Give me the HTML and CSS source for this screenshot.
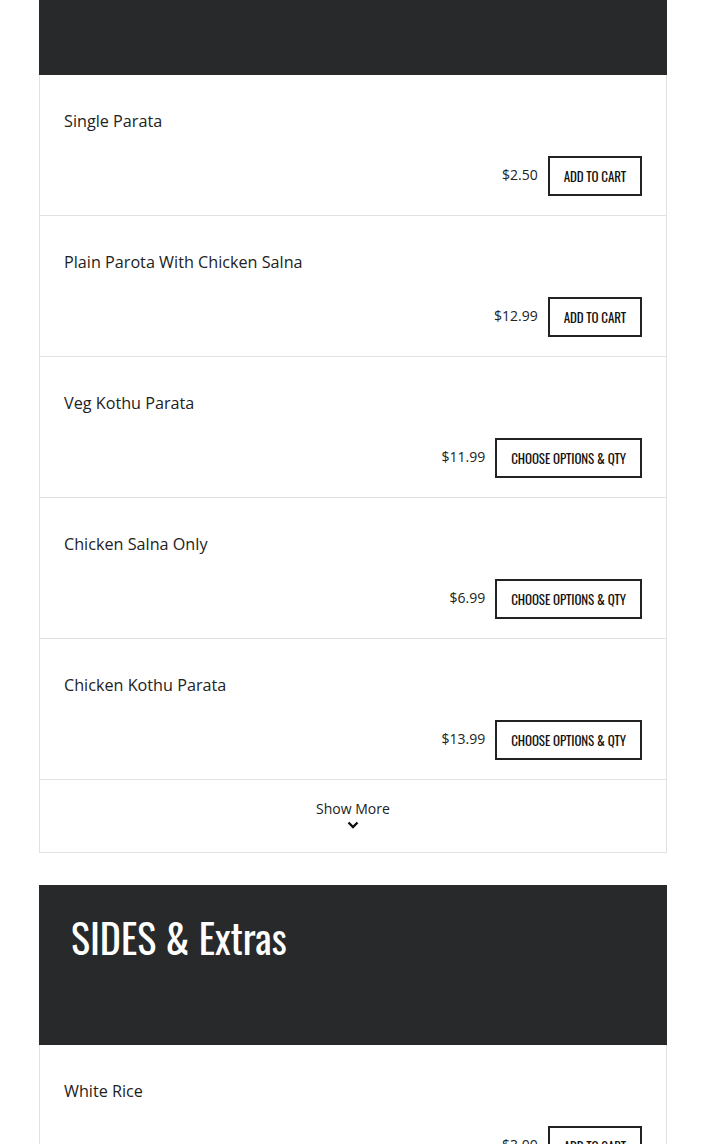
FILE: index.html
```html
<!DOCTYPE html>
<html>
<head>
  <meta charset="UTF-8" />
  <meta name="viewport" content="width=device-width, initial-scale=1.0" />
  <title>Menu</title>
  <link rel="stylesheet" href="styles.css">
</head>
<body>
  <div class="menu">
    <section class="category">
      <div class="category-head top"></div>
      <div class="items">
        <div class="item">
          <div class="item-name">Single Parata</div>
          <div class="item-buy">
            <span class="price">$2.50</span>
            <button class="cart-btn">Add to cart</button>
          </div>
        </div>
        <div class="item">
          <div class="item-name">Plain Parota With Chicken Salna</div>
          <div class="item-buy">
            <span class="price">$12.99</span>
            <button class="cart-btn">Add to cart</button>
          </div>
        </div>
        <div class="item">
          <div class="item-name">Veg Kothu Parata</div>
          <div class="item-buy">
            <span class="price">$11.99</span>
            <button class="cart-btn">Choose options &amp; qty</button>
          </div>
        </div>
        <div class="item">
          <div class="item-name">Chicken Salna Only</div>
          <div class="item-buy">
            <span class="price">$6.99</span>
            <button class="cart-btn">Choose options &amp; qty</button>
          </div>
        </div>
        <div class="item">
          <div class="item-name">Chicken Kothu Parata</div>
          <div class="item-buy">
            <span class="price">$13.99</span>
            <button class="cart-btn">Choose options &amp; qty</button>
          </div>
        </div>
        <div class="show-more">
          <span>Show More</span>
          <svg width="12" height="8" viewBox="0 0 12 8">
            <path d="M1.5 1.5 L6 6 L10.5 1.5" fill="none" stroke="#111" stroke-width="2.4" />
          </svg>
        </div>
      </div>
    </section>

    <section class="category">
      <div class="category-head">
        <h2>SIDES &amp; Extras</h2>
      </div>
      <div class="items">
        <div class="item">
          <div class="item-name">White Rice</div>
          <div class="item-buy">
            <span class="price">$3.00</span>
            <button class="cart-btn">Add to cart</button>
          </div>
        </div>
      </div>
    </section>
  </div>
</body>
</html>
```

FILE: styles.css
```css
body {
  margin: 0;
  font-family: "Open Sans", Arial, sans-serif;
  color: #222;
  background-color: #fff;
}

.menu {
  width: 628px;
  margin-left: 39px;
  display: flex;
  flex-direction: column;
  gap: 32px;
}

.category-head {
  background-color: #27292b;
  height: 160px;
  padding: 0 32px;
  box-sizing: border-box;
}

.category-head.top {
  height: 75px;
}

.category-head h2 {
  margin: 0;
  padding-top: 21px;
  font-family: "Oswald", "DejaVu Sans Condensed", sans-serif;
  font-weight: 400;
  font-size: 40px;
  line-height: 62px;
  color: #fff;
}

.items {
  border: 1px solid #e2e2e2;
  border-top: none;
}

.item {
  padding: 33px 24px 19px;
  border-bottom: 1px solid #e2e2e2;
}

.item-name {
  font-size: 16.2px;
  line-height: 26px;
  color: #222;
}

.item-buy {
  margin-top: 22px;
  display: flex;
  justify-content: flex-end;
  align-items: center;
  gap: 10px;
}

.price {
  font-size: 14px;
  color: #222;
  margin-top: -3px;
}

.cart-btn {
  height: 40px;
  padding: 0 14px;
  border: 2px solid #222;
  background-color: #fff;
  color: #111;
  font-family: "Oswald", "DejaVu Sans Condensed", sans-serif;
  font-size: 13px;
  text-transform: uppercase;
  letter-spacing: -0.1px;
  cursor: pointer;
}

.show-more {
  height: 72px;
  padding-top: 19px;
  box-sizing: border-box;
  display: flex;
  flex-direction: column;
  align-items: center;
  gap: 3px;
  font-size: 14px;
  color: #222;
}
```
